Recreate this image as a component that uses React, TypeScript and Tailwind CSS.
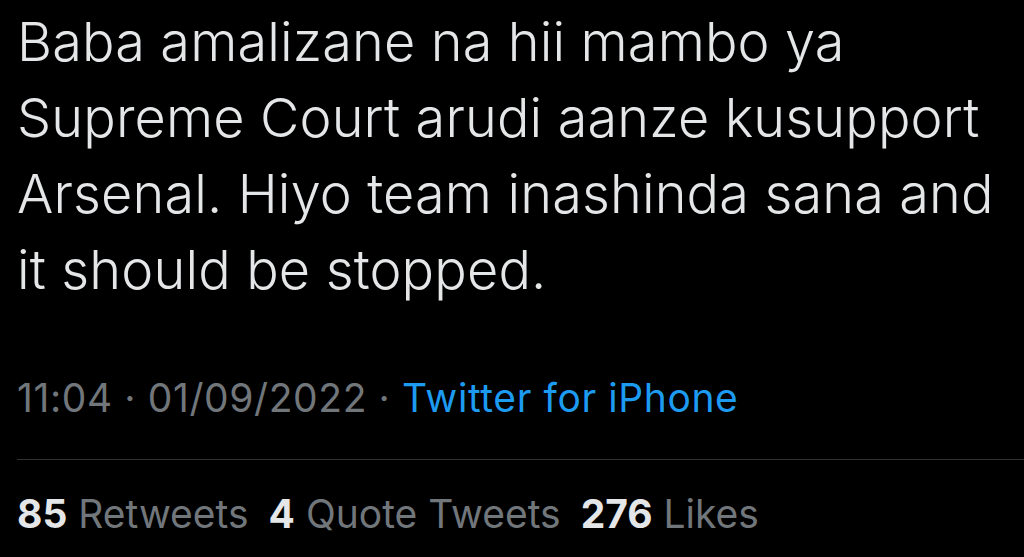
const stats = [
  { n: '85', label: 'Retweets' },
  { n: '4', label: 'Quote Tweets' },
  { n: '276', label: 'Likes' },
];

export default function App() {
  return (
    <div className="w-[1024px] h-[557px] bg-black overflow-hidden font-['Inter',sans-serif]">
      <div className="pl-[17px] pt-[4px]">
        <p className="text-[#e4e6e7] text-[54px] font-light leading-[76px] tracking-[0.15px] w-[1010px]">
          Baba amalizane na hii mambo ya
          <br />
          Supreme Court arudi aanze kusupport
          <br />
          Arsenal. Hiyo team inashinda sana and
          <br />
          it should be stopped.
        </p>
        <div className="mt-[66px] text-[39px] leading-[48px] tracking-[0.6px] text-[#71767b]">
          11:04 · 01/09/2022 · <span className="text-[#1d9bf0]">Twitter for iPhone</span>
        </div>
      </div>
      <div className="ml-[17px] mt-[37px] h-px bg-[#2f3336]" />
      <div className="pl-[17px] pt-[30px] flex gap-[20px] text-[39px] leading-[48px]">
        {stats.map((s) => (
          <span key={s.label} className="text-[#71767b]">
            <span className="font-bold text-[#e4e6e7]">{s.n}</span> {s.label}
          </span>
        ))}
      </div>
    </div>
  );
}
